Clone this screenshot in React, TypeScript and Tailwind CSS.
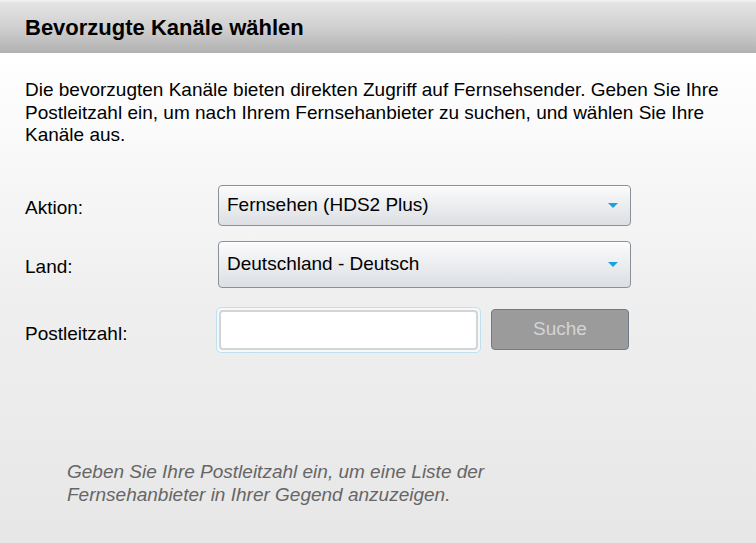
function Arrow() {
  return (
    <svg width="10" height="5" viewBox="0 0 10 5" className="shrink-0">
      <path d="M0 0 L10 0 L5 5 Z" fill="#1ba1e2" />
    </svg>
  )
}

function SelectBox({ value, h }: { value: string; h: string }) {
  return (
    <div
      className={`${h} w-[413px] rounded-[4px] border border-[#8a9099] bg-gradient-to-b from-[#fbfbfc] to-[#dcdfe3] flex items-center justify-between pl-[8px] pr-[12px] shadow-[inset_0_1px_0_#ffffff]`}
    >
      <span className="text-[19px] text-black">{value}</span>
      <Arrow />
    </div>
  )
}

export default function App() {
  return (
    <div className="w-[756px] h-[543px] bg-[#efefef] font-['Liberation_Sans',Arial,sans-serif] overflow-hidden">
      <div className="mt-[2px] h-[51px] bg-gradient-to-b from-[#e5e5e5] via-[#d0d0d0] to-[#b1b1b1] flex items-center px-[25px]">
        <h1 className="text-[22px] font-bold text-black">Bevorzugte Kanäle wählen</h1>
      </div>
      <div className="h-[490px] bg-gradient-to-b from-white via-[#efefef] to-[#e7e7e7] px-[25px] pt-[26px]">
        <p className="text-[19px] leading-[22.5px] text-black">
          Die bevorzugten Kanäle bieten direkten Zugriff auf Fernsehsender. Geben Sie Ihre
          <br />
          Postleitzahl ein, um nach Ihrem Fernsehanbieter zu suchen, und wählen Sie Ihre
          <br />
          Kanäle aus.
        </p>

        <div className="mt-[38px] grid grid-cols-[193px_1fr] items-center gap-y-[15px] text-[19px] text-black">
          <span className="pt-[6px]">Aktion:</span>
          <SelectBox value="Fernsehen (HDS2 Plus)" h="h-[41px]" />
          <span className="pt-[6px]">Land:</span>
          <SelectBox value="Deutschland - Deutsch" h="h-[47px]" />
          <span className="pt-[10px] mt-[4px]">Postleitzahl:</span>
          <div className="flex items-center gap-[10px] mt-[4px] -ml-[2px]">
            <div className="w-[265px] h-[46px] rounded-[5px] border border-[#bfe0ef] p-[2px] bg-[#f4f9fb]">
              <input
                className="w-full h-full rounded-[4px] border-2 border-[#d4d4d4] bg-white outline-none px-2 text-[19px]"
                type="text"
              />
            </div>
            <button className="w-[138px] h-[41px] rounded-[4px] border border-[#6f7c88] bg-[#9b9b9b] text-[19px] text-[#d4d4d4]">
              Suche
            </button>
          </div>
        </div>

        <p className="mt-[107px] ml-[42px] italic text-[19px] leading-[23px] text-[#666666]">
          Geben Sie Ihre Postleitzahl ein, um eine Liste der
          <br />
          Fernsehanbieter in Ihrer Gegend anzuzeigen.
        </p>
      </div>
    </div>
  )
}
